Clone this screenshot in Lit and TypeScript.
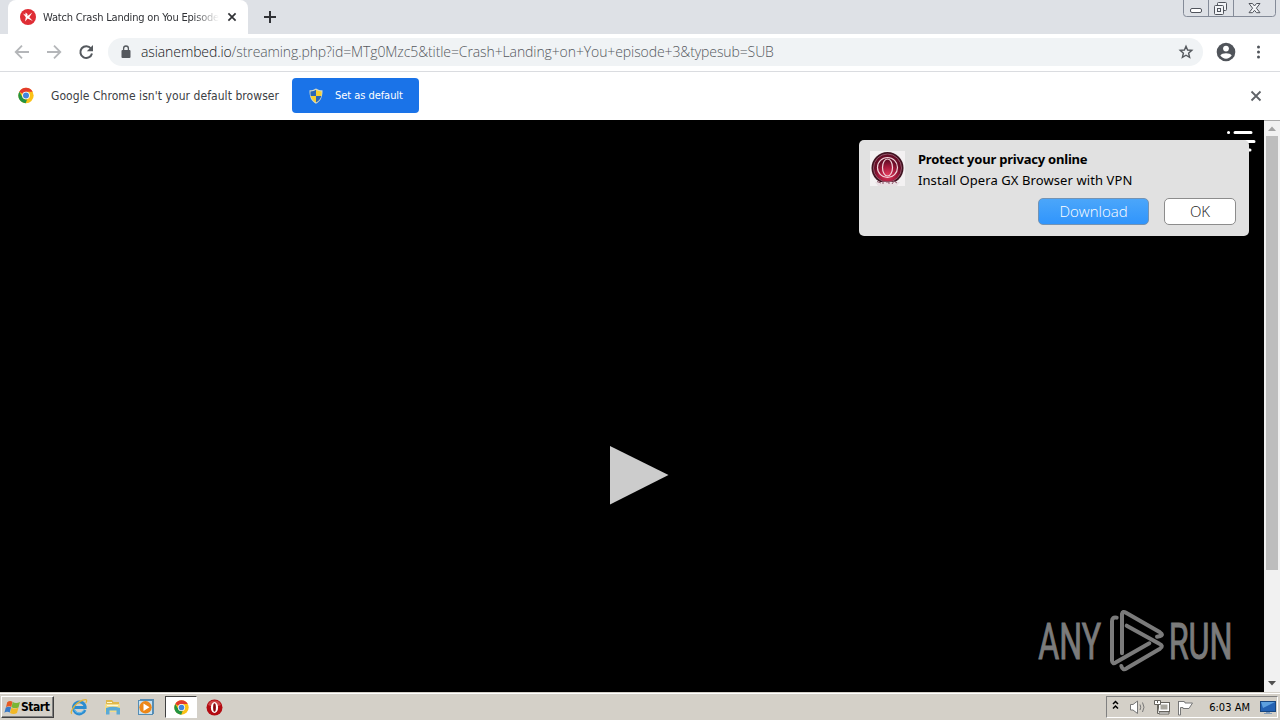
import { LitElement, css, html, svg } from 'lit';
import { customElement } from 'lit/decorators.js';

/** Four colour Chrome mark, shared by the info bar and the taskbar. */
const chromeLogo = svg`
  <circle cx="24" cy="24" r="23" fill="#fbc116" />
  <path d="M4 12.500A23 23 0 0 1 44 12.500H24A11.500 11.500 0 0 0 14 18.500Z" fill="#e33b2e" />
  <path d="M4 12.500 14 29.700A11.500 11.500 0 0 0 27.500 35L23 47A23 23 0 0 1 4 12.500Z" fill="#229342" />
  <circle cx="24" cy="24" r="11.500" fill="#fff" />
  <circle cx="24" cy="24" r="9" fill="#4285dc" />
`;

/** Tab strip, address bar and the default browser prompt. */
@customElement('browser-chrome')
export class BrowserChrome extends LitElement {
  static styles = css`
    :host {
      display: block;
      height: 120px;
      background: #fff;
      font-family: 'Open Sans', 'Noto Sans', sans-serif;
    }

    svg {
      display: block;
      flex: none;
    }

    .strip {
      display: flex;
      height: 34px;
      background: #dee1e6;
    }

    .tab {
      display: flex;
      align-items: center;
      box-sizing: border-box;
      width: 240px;
      margin-left: 8px;
      padding: 0 9px 0 12px;
      border-radius: 8px 8px 0 0;
      background: #fff;
    }

    .tab-title {
      flex: none;
      width: 182px;
      margin: 0 0 0 7px;
      white-space: nowrap;
      font: 11px 'DejaVu Sans Condensed', 'DejaVu Sans', sans-serif;
      font-stretch: condensed;
      letter-spacing: -0.19px;
      color: #303236;
      -webkit-mask-image: linear-gradient(90deg, #000 150px, transparent 176px);
      mask-image: linear-gradient(90deg, #000 150px, transparent 176px);
    }

    .new-tab {
      margin: 10px 0 0 15px;
    }

    .controls {
      margin: 0 4px 0 auto;
    }

    .toolbar {
      display: flex;
      align-items: center;
      box-sizing: border-box;
      height: 38px;
      padding: 0 13px 1px 14px;
      border-bottom: 1px solid #dadce0;
    }

    .address {
      display: flex;
      align-items: center;
      box-sizing: border-box;
      width: 1095px;
      height: 28px;
      margin-left: 14px;
      padding: 0 9px 0 12px;
      border-radius: 14px;
      background: #f0f3f5;
    }

    .url {
      flex: 1;
      margin: -1px 0 0 9px;
      white-space: nowrap;
      font-size: 14px;
      font-weight: 300;
      letter-spacing: -0.1px;
      color: #55595e;
    }

    .host {
      color: #16181b;
    }

    .menu {
      margin-left: auto;
    }

    .prompt {
      display: flex;
      align-items: center;
      box-sizing: border-box;
      height: 48px;
      padding: 0 18px 1px;
    }

    .message {
      width: 228px;
      margin: 0 13px 0 17px;
      white-space: nowrap;
      font: 12px 'DejaVu Sans Condensed', 'DejaVu Sans', sans-serif;
      font-stretch: condensed;
      letter-spacing: 0.06px;
      color: #3c4043;
    }

    .default {
      display: flex;
      align-items: center;
      box-sizing: border-box;
      width: 127px;
      height: 35px;
      padding: 0 16px;
      gap: 11px;
      border: 0;
      border-radius: 4px;
      background: #1a73e8;
      white-space: nowrap;
      font: 11px 'DejaVu Sans Condensed', 'DejaVu Sans', sans-serif;
      font-stretch: condensed;
      letter-spacing: -0.05px;
      color: #fff;
    }

    .dismiss {
      margin: 1px 0 0 auto;
    }
  `;

  render() {
    return html`
      <div class="strip">
        <div class="tab">
          <svg width="16" height="16" viewBox="0 0 16 16">
            <circle cx="8" cy="8" r="8" fill="#df2d35" />
            <path d="M3 4.500 5.500 5.700V3.500L7.500 5V7L12.300 3.400 9.300 8.200 12.800 12 7.700 9.400 5 12.500 5.800 8.300Z" fill="#fff" />
          </svg>
          <div class="tab-title">Watch Crash Landing on You Episode</div>
          <svg width="14" height="14" viewBox="0 0 14 14">
            <path d="M3.4 3.4 10.6 10.6M10.6 3.4 3.4 10.6" stroke="#303236" stroke-width="1.7" />
          </svg>
        </div>
        <svg class="new-tab" width="14" height="14" viewBox="0 0 14 14">
          <path d="M7 1V13M1 7H13" stroke="#303236" stroke-width="2" />
        </svg>
        <svg class="controls" width="93" height="18" viewBox="0 0 93 18" fill="none" stroke="#848b98">
          <path d="M.5 0V13.5Q.5 16.5 3.5 16.5H89.5Q92.5 16.5 92.5 13.5V0M25.5 0V16.5M50.5 0V16.5" />
          <g stroke="#50545c">
            <rect x="7.5" y="8.5" width="11" height="4" rx="1.5" fill="#fff" />
            <rect x="34.5" y="2.5" width="9" height="8" rx="1" fill="#f2f4f7" />
            <rect x="31.5" y="5.5" width="9" height="9" rx="1" fill="#f2f4f7" />
            <rect x="34.5" y="8.5" width="3" height="3" />
            <path
              d="M66 3.5H69.5L71.5 6 73.5 3.5H77L73.4 8.2 77 12.7H73.5L71.5 10.3 69.5 12.7H66L69.6 8.2Z"
              fill="#f2f4f7"
            />
          </g>
        </svg>
      </div>
      <div class="toolbar">
        <svg width="80" height="16" viewBox="0 0 80 16" fill="none" stroke-width="1.8">
          <path d="M15 8H2M8 1.7 1.7 8 8 14.3" stroke="#b4b6b9" />
          <path d="M33 8H46M40 1.7 46.3 8 40 14.3" stroke="#b4b6b9" />
          <path d="M77 4.5A5.9 5.9 0 1 0 78 9.5" stroke="#55595e" stroke-width="2" />
          <path d="M79 1V7.2H72.8Z" fill="#55595e" />
        </svg>
        <div class="address">
          <svg width="12" height="14" viewBox="0 0 12 14">
            <rect x="1.5" y="5" width="9" height="8" rx="1" fill="#55595e" />
            <path d="M3.6 5.5V3.4A2.4 2.4 0 0 1 8.4 3.4V5.5" fill="none" stroke="#55595e" stroke-width="1.3" />
          </svg>
          <div class="url"><span class="host">asianembed.io</span>/streaming.php?id=MTg0Mzc5&title=Crash+Landing+on+You+episode+3&typesub=SUB</div>
          <svg width="16" height="16" viewBox="0 0 16 16">
            <path
              d="M8 2.2 9.6 6 13.8 6.400 10.600 9.200 11.600 13.400 8 11.200 4.400 13.400 5.400 9.200 2.200 6.400 6.400 6Z"
              fill="none"
              stroke="#55595e"
              stroke-width="1.4"
            />
          </svg>
        </div>
        <svg class="menu" width="51" height="20" viewBox="0 0 51 20">
          <circle cx="10" cy="10" r="9.3" fill="#50545a" />
          <circle cx="10" cy="6.6" r="2.9" fill="#fff" />
          <path d="M4.3 13.6C5.9 10.4 14.1 10.4 15.7 13.6 14.3 15.6 12.3 16.7 10 16.7S5.700 15.6 4.3 13.6Z" fill="#fff" />
          <g fill="#50545a">
            <circle cx="42.500" cy="5" r="1.5" />
            <circle cx="42.500" cy="10" r="1.5" />
            <circle cx="42.500" cy="15" r="1.5" />
          </g>
        </svg>
      </div>
      <div class="prompt">
        <svg width="16" height="17" viewBox="0 0 48 48">${chromeLogo}</svg>
        <div class="message">Google Chrome isn't your default browser</div>
        <button class="default">
          <svg width="16" height="16" viewBox="0 0 16 16">
            <path d="M8 .5C10 1.8 12 2.3 14.5 2.3 14.7 9 12.5 13.5 8 15.7 3.5 13.5 1.3 9 1.5 2.3 4 2.3 6 1.8 8 .5Z" fill="#d5dbc8" />
            <path d="M8 1.8V8H2.7C2.4 6.5 2.4 5 2.5 3.4 4.6 3.3 6.4 2.8 8 1.8Z" fill="#2a66b8" />
            <path d="M8 1.8V8H13.3C13.6 6.5 13.6 5 13.5 3.4 11.4 3.3 9.6 2.8 8 1.8Z" fill="#f6cf32" />
            <path d="M8 8V14.5C5.2 13 3.4 10.8 2.7 8Z" fill="#f6cf32" />
            <path d="M8 8V14.5C10.8 13 12.6 10.8 13.3 8Z" fill="#2a66b8" />
          </svg>
          Set as default
        </button>
        <svg class="dismiss" width="12" height="12" viewBox="0 0 12 12">
          <path d="M1.5 1.5 10.5 10.5M10.5 1.5 1.5 10.5" stroke="#5f6368" stroke-width="1.8" />
        </svg>
      </div>
    `;
  }
}

/** Advert toast floating above the player. */
@customElement('promo-toast')
export class PromoToast extends LitElement {
  static styles = css`
    :host {
      display: grid;
      grid-template-columns: 35px 1fr;
      column-gap: 13px;
      box-sizing: border-box;
      width: 390px;
      height: 96px;
      padding: 11px 13px 11px 11px;
      border-radius: 5px;
      background: #e1e1e1;
      color: #000;
      font-family: 'Noto Sans', 'Open Sans', sans-serif;
      white-space: nowrap;
    }

    .title,
    .text {
      margin: 0;
      font-size: 13px;
      line-height: 20px;
      letter-spacing: 0.09px;
    }

    .title {
      margin: -2px 0 1px;
      font-weight: 700;
      letter-spacing: -0.22px;
    }

    .actions {
      display: flex;
      grid-column: 1 / -1;
      justify-content: flex-end;
      gap: 15px;
      margin-top: 8px;
    }

    button {
      box-sizing: border-box;
      width: 72px;
      height: 27px;
      padding: 0 0 2px;
      border: 1px solid #8c8c8c;
      border-radius: 5px;
      background: #fff;
      font: 300 15px 'Open Sans', sans-serif;
      color: #222;
    }

    .primary {
      width: 111px;
      border-color: #7393b4;
      background: linear-gradient(#4ba6fa, #3095fc);
      color: #fff;
    }
  `;

  render() {
    return html`
      <svg width="35" height="35" viewBox="0 0 35 35">
        <defs>
          <radialGradient id="ball" cy="0.75">
            <stop offset="0" stop-color="#e33b5c" />
            <stop offset="0.6" stop-color="#a5193c" />
            <stop offset="1" stop-color="#680d27" />
          </radialGradient>
        </defs>
        <rect width="35" height="35" fill="#f3f1f2" />
        <circle cx="17.5" cy="17" r="16" fill="#401321" />
        <circle cx="17.5" cy="17" r="14" fill="url(#ball)" stroke="#92566a" />
        <g fill="none" stroke="#f1d5dc" stroke-width="1.2">
          <circle cx="17.5" cy="16.500" r="10" />
          <ellipse cx="17.5" cy="16.500" rx="5" ry="8.5" />
        </g>
        <path d="M5 31H30L27 35H8Z" fill="#e8dfe3" />
        <path d="M7 30.500 11 32M13 30V33M16 31H19V33M22 33 24 30 27 32" fill="none" stroke="#8d5468" />
      </svg>
      <div>
        <p class="title">Protect your privacy online</p>
        <p class="text">Install Opera GX Browser with VPN</p>
      </div>
      <div class="actions">
        <button class="primary">Download</button>
        <button>OK</button>
      </div>
    `;
  }
}

/** Video page with its scrollbar. */
@customElement('player-page')
export class PlayerPage extends LitElement {
  static styles = css`
    :host {
      display: flex;
      position: relative;
      height: 572px;
      background: #000;
    }

    svg {
      display: block;
    }

    .stage {
      display: flex;
      flex: 1;
      align-items: center;
      justify-content: center;
    }

    .play {
      margin: 138px 0 0 14px;
    }

    .list {
      position: absolute;
      top: 8px;
      right: 22px;
    }

    promo-toast {
      position: absolute;
      top: 20px;
      right: 31px;
    }

    .watermark {
      position: absolute;
      right: 30px;
      bottom: 12px;
      font-family: Roboto, 'Liberation Sans', sans-serif;
    }

    .scroll {
      display: flex;
      flex-direction: column;
      align-items: center;
      width: 16px;
      background: #f1f1f1;
    }

    .thumb {
      width: 12px;
      height: 434px;
      margin-bottom: auto;
      background: #bdbdbd;
    }
  `;

  render() {
    return html`
      <div class="stage">
        <svg class="play" width="60" height="60" viewBox="0 0 60 60">
          <path d="M1 1 59.5 30 1 59.5Z" fill="#ccc" />
        </svg>
      </div>
      <div class="scroll">
        <svg width="16" height="16" viewBox="0 0 16 16">
          <path d="M0 .5H16" stroke="#aaa" />
          <path d="M4 11 8 6.5 12 11Z" fill="#a3a3a3" />
        </svg>
        <div class="thumb"></div>
        <svg width="16" height="16" viewBox="0 0 16 16">
          <path d="M4 5 8 9.5 12 5Z" fill="#505050" />
        </svg>
      </div>
      <svg class="list" width="32" height="26" viewBox="0 0 32 26">
        <g fill="none" stroke="#fff" stroke-width="3" stroke-linecap="round">
          <path d="M2.5 4.5H2.6M9 4.5H25M9 13.5H28M2.5 22H2.6M9 22H24" />
        </g>
      </svg>
      <promo-toast></promo-toast>
      <svg class="watermark" width="234" height="80" viewBox="0 0 702 240" fill="#7b7b7b">
        <g stroke="#7b7b7b" stroke-width="3">
          <text x="67" y="177" font-size="152" textLength="188" lengthAdjust="spacingAndGlyphs">ANY</text>
          <text x="458" y="177" font-size="152" textLength="192" lengthAdjust="spacingAndGlyphs">RUN</text>
        </g>
        <g
          fill="none"
          stroke="#7b7b7b"
          stroke-width="12"
          stroke-linejoin="round"
          stroke-linecap="round"
          transform="translate(12 0)"
        >
          <path d="M290 53Q276 50 276 64V182Q277 194 288 187L388 130" />
          <path d="M306 160V42Q308 32 318 38L420 97Q431 104 421 108L411 110" />
          <path d="M320 77 418 131Q432 138 420 146L320 205Q308 213 304 198" />
        </g>
      </svg>
    `;
  }
}

/** Classic theme taskbar with quick launch icons and the tray. */
@customElement('task-bar')
export class TaskBar extends LitElement {
  static styles = css`
    :host {
      display: flex;
      align-items: center;
      box-sizing: border-box;
      height: 28px;
      padding: 2px 2px 1px 1px;
      border-top: 1px solid #d4d0c8;
      box-shadow: inset 0 1px #fff;
      background: #d4d0c8;
      color: #000;
      font: 11px 'DejaVu Sans Condensed', 'DejaVu Sans', sans-serif;
      font-stretch: condensed;
      white-space: nowrap;
    }

    svg {
      display: block;
      flex: none;
    }

    .start {
      display: flex;
      align-items: center;
      box-sizing: border-box;
      width: 53px;
      height: 22px;
      padding: 0 2px;
      border: 1px solid;
      border-color: #fff #404040 #404040 #fff;
      box-shadow: inset -1px -1px #808080;
      font-weight: 700;
      font-size: 12px;
      letter-spacing: -0.45px;
    }

    .launch {
      display: flex;
      align-items: center;
      margin-left: 16px;
    }

    .launch > * {
      margin-right: 16px;
    }

    .launch .open {
      display: flex;
      align-items: center;
      justify-content: center;
      box-sizing: border-box;
      width: 32px;
      height: 22px;
      margin: 0 9px 0 -6px;
      border: 1px solid;
      border-color: #404040 #fff #fff #404040;
      background: #fff;
    }

    .tray {
      display: flex;
      align-items: center;
      box-sizing: border-box;
      width: 172px;
      height: 22px;
      margin-left: auto;
      padding: 0 1px 0 4px;
      border: 1px solid;
      border-color: #808080 #fff #fff #808080;
    }

    .clock {
      margin: 0 10px 0 auto;
      letter-spacing: 0.02px;
    }
  `;

  render() {
    return html`
      <div class="start">
        <svg width="17" height="17" viewBox="0 0 17 17">
          <path d="M3.2 3.2Q6 1 8.5 2.8L7.3 7.9Q4.7 6.500 2 8.2Z" fill="#e65a22" />
          <path d="M8.700 3Q12 5 16 3L14.5 8.400Q11 9.8 7.500 8.2Z" fill="#79b634" />
          <path d="M1.8 8.4Q4.5 7 7.1 8.2L5.8 13.6Q3 12 .4 13.800Z" fill="#397ac7" />
          <path d="M7.4 8.700Q11 10.4 14.4 8.800L13 14Q9.6 15.900 6 14Z" fill="#f2b827" />
        </svg>
        Start
      </div>
      <div class="launch">
        <svg width="18" height="18" viewBox="0 0 18 18" fill="none">
          <path d="M15 12A6 6 0 1 1 15.2 8.6V9.5H5" stroke="#2b8cd0" stroke-width="2.8" />
          <path d="M14.3 11.7A5.5 5.5 0 0 1 4 11" stroke="#66bdec" />
          <path d="M2 15.5C-1 15 5 5 12.8 2.2 17 .8 17.5 2.2 15.8 5" stroke="#e2b53b" stroke-width="1.3" />
        </svg>
        <svg width="18" height="18" viewBox="0 0 18 18">
          <path d="M2 2H8L9.5 4H15V10H2Z" fill="#dfb84c" />
          <path d="M1 6H16V14H1Z" fill="#f3dc8a" />
          <path d="M2 10Q9 7.5 16 10V16.5H12.500V12.5H5.500V16.5H2Z" fill="#5aaad6" />
          <path d="M3 4.5H8M3 7.5H14" stroke="#fff8d0" />
        </svg>
        <svg width="17" height="18" viewBox="0 0 17 18">
          <rect x="2.500" y="1.500" width="13" height="14" fill="#9dc5e1" stroke="#568db4" />
          <rect x=".5" y="2.5" width="14" height="14" fill="#c7e2f3" stroke="#568db4" />
          <circle cx="7.500" cy="9.3" r="6.2" fill="#ed8718" />
          <path d="M5.500 5.5 11.5 9.3 5.500 13.100Z" fill="#fff" />
        </svg>
        <div class="open">
          <svg width="15" height="15" viewBox="0 0 48 48">${chromeLogo}</svg>
        </div>
        <svg width="17" height="17" viewBox="0 0 17 17">
          <circle cx="8.5" cy="8.5" r="8" fill="#b30b12" />
          <path d="M2 6A7 7 0 0 1 15 6Q8.5 9 2 6Z" fill="#cf4647" />
          <ellipse cx="8.500" cy="8.500" rx="3.600" ry="5.400" fill="#fff" />
          <ellipse cx="8.500" cy="8.500" rx="1.400" ry="4.300" fill="#8a080d" />
        </svg>
      </div>
      <div class="tray">
        <svg width="84" height="18" viewBox="0 0 84 18" fill="none">
          <path d="M2 6 4.5 3.500 7 6M2 10.500 4.5 8 7 10.500" stroke="#000" stroke-width="1.5" />
          <g stroke="#777">
            <path d="M19.5 6.5H22L26.5 3V15.5L22 12H19.5Z" fill="#fff" />
            <path d="M29 6.5Q30.5 9.2 29 12M31.5 4.5Q34.500 9.2 31.5 14" />
          </g>
          <g stroke="#66645e">
            <rect x="47.5" y="4.5" width="11" height="9" fill="#fff" />
            <rect x="49.500" y="6.500" width="7" height="5" fill="#a9a79f" stroke="none" />
            <path d="M48 16H58V14H48Z" fill="#fff" />
            <path d="M43.500 2.500H49.500V6.500H43.500ZM46.500 2.500V5M46.5 7V15.500H48" fill="#fff" />
          </g>
          <path d="M67.500 3V17H69.500V9.500H72V10.500H78L81.5 5H74Q74 3.500 73 3.500H67.500" fill="#fff" stroke="#777" />
        </svg>
        <span class="clock">6:03 AM</span>
        <svg width="16" height="16" viewBox="0 0 16 16">
          <rect x=".5" y="2.5" width="15" height="10" fill="#2462b3" stroke="#174680" />
          <path d="M1 3H15L3 9Z" fill="#5da0df" />
          <path d="M6 13H10V14H12V15H4V14H6Z" fill="#829cb8" />
        </svg>
      </div>
    `;
  }
}

@customElement('app-root')
export class AppRoot extends LitElement {
  static styles = css`
    :host {
      display: flex;
      flex-direction: column;
      width: 1280px;
      height: 720px;
      overflow: hidden;
    }
  `;

  render() {
    return html`
      <browser-chrome></browser-chrome>
      <player-page></player-page>
      <task-bar></task-bar>
    `;
  }
}
